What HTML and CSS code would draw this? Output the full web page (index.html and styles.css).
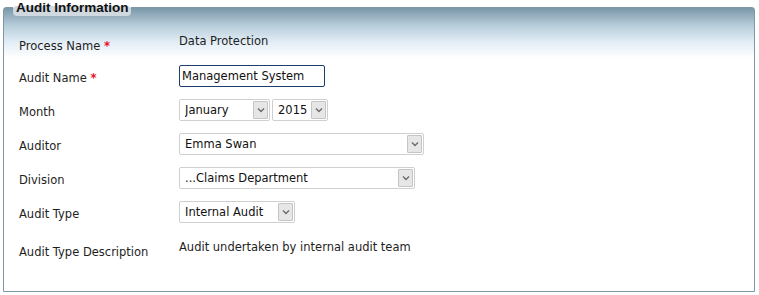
FILE: index.html
```html
<!DOCTYPE html>
<html>
<head>
  <meta name="viewport" content="width=device-width, initial-scale=1">
  <title>Audit Information</title>
  <link rel="stylesheet" href="styles.css">
</head>
<body>
  <fieldset class="panel">
    <legend class="panel-title">Audit Information</legend>
    <div class="form-grid">
      <div class="field-label label-first">Process Name <span class="required">*</span></div>
      <div class="field-value value-text">Data Protection</div>

      <div class="field-label">Audit Name <span class="required">*</span></div>
      <div class="field-value">
        <input class="text-input" type="text" value="Management System">
      </div>

      <div class="field-label">Month</div>
      <div class="field-value">
        <span class="select-wrap month-select">
          <select class="select-box"><option>January</option></select>
          <span class="select-arrow"><svg width="8" height="6" viewBox="0 0 8 6"><path d="M1 1.5 L4 4.5 L7 1.5" fill="none" stroke="#6b6b6b" stroke-width="1.4"/></svg></span>
        </span>
        <span class="select-wrap year-select">
          <select class="select-box"><option>2015</option></select>
          <span class="select-arrow"><svg width="8" height="6" viewBox="0 0 8 6"><path d="M1 1.5 L4 4.5 L7 1.5" fill="none" stroke="#6b6b6b" stroke-width="1.4"/></svg></span>
        </span>
      </div>

      <div class="field-label">Auditor</div>
      <div class="field-value">
        <span class="select-wrap auditor-select">
          <select class="select-box"><option>Emma Swan</option></select>
          <span class="select-arrow"><svg width="8" height="6" viewBox="0 0 8 6"><path d="M1 1.5 L4 4.5 L7 1.5" fill="none" stroke="#6b6b6b" stroke-width="1.4"/></svg></span>
        </span>
      </div>

      <div class="field-label">Division</div>
      <div class="field-value">
        <span class="select-wrap division-select">
          <select class="select-box"><option>...Claims Department</option></select>
          <span class="select-arrow"><svg width="8" height="6" viewBox="0 0 8 6"><path d="M1 1.5 L4 4.5 L7 1.5" fill="none" stroke="#6b6b6b" stroke-width="1.4"/></svg></span>
        </span>
      </div>

      <div class="field-label">Audit Type</div>
      <div class="field-value">
        <span class="select-wrap type-select">
          <select class="select-box"><option>Internal Audit</option></select>
          <span class="select-arrow"><svg width="8" height="6" viewBox="0 0 8 6"><path d="M1 1.5 L4 4.5 L7 1.5" fill="none" stroke="#6b6b6b" stroke-width="1.4"/></svg></span>
        </span>
      </div>

      <div class="field-label label-last">Audit Type Description</div>
      <div class="field-value value-text value-last">Audit undertaken by internal audit team</div>
    </div>
  </fieldset>
</body>
</html>
```

FILE: styles.css
```css
html {
  height: 100%;
}

body {
  margin: 0;
  font-family: "DejaVu Sans", Verdana, sans-serif;
  font-size: 11.5px;
  color: #1e1e1e;
  background-color: #ffffff;
}

.panel {
  margin: 0 4px 0 3px;
  padding: 0 14px 32px 15px;
  border: 1px solid #7f97a6;
  border-radius: 3px 3px 0 0;
  background: linear-gradient(to bottom, #7a97a8 0px, #b8cedb 18px, #e2edf6 34px, #ffffff 50px, #ffffff 100%);
  background-repeat: no-repeat;
}

.panel-title {
  position: relative;
  z-index: 0;
  margin-left: -6px;
  padding: 0 3px 0 3px;
  font-family: "Liberation Sans", Arial, sans-serif;
  font-weight: bold;
  font-size: 13.5px;
  line-height: 15px;
  color: #111111;
}

/* the pale tab only shows below the top border */
.panel-title::before {
  content: "";
  position: absolute;
  z-index: -1;
  top: 6px;
  bottom: -1px;
  left: 0;
  right: 0;
  background-color: #cfd9df;
  border-radius: 4px;
}

.form-grid {
  display: grid;
  grid-template-columns: 160px 1fr;
  row-gap: 12px;
  padding-top: 19px;
}

.field-label {
  padding-top: 6px;
  line-height: 14px;
}

.label-first {
  padding-top: 5px;
}

.label-last {
  padding-top: 10px;
}

.required {
  color: #e8102a;
  font-weight: bold;
}

.field-value {
  display: flex;
  gap: 2px;
  align-items: flex-start;
}

.value-text {
  line-height: 14px;
}

.value-last {
  padding-top: 5px;
}

.text-input {
  box-sizing: border-box;
  width: 146px;
  height: 22px;
  margin: 0;
  padding: 0 2px;
  font-family: inherit;
  font-size: 11.5px;
  color: #111111;
  border: 1px solid #1c3f6e;
  border-radius: 2px;
  outline: none;
}

.select-wrap {
  position: relative;
  display: inline-block;
  height: 22px;
}

.select-box {
  box-sizing: border-box;
  width: 100%;
  height: 22px;
  margin: 0;
  padding: 0 20px 0 5px;
  font-family: inherit;
  font-size: 11.5px;
  color: #111111;
  background-color: #ffffff;
  border: 1px solid #cfcfcf;
  border-radius: 2px;
  appearance: none;
  -webkit-appearance: none;
}

.select-arrow {
  position: absolute;
  top: 2px;
  right: 2px;
  width: 15px;
  height: 18px;
  display: flex;
  align-items: center;
  justify-content: center;
  box-sizing: border-box;
  background-color: #e6e6e6;
  border: 1px solid #c4c4c4;
  border-radius: 1px;
}

.month-select {
  width: 91px;
}

.year-select {
  width: 56px;
}

.auditor-select {
  width: 245px;
}

.division-select {
  width: 236px;
}

.type-select {
  width: 116px;
}
```
